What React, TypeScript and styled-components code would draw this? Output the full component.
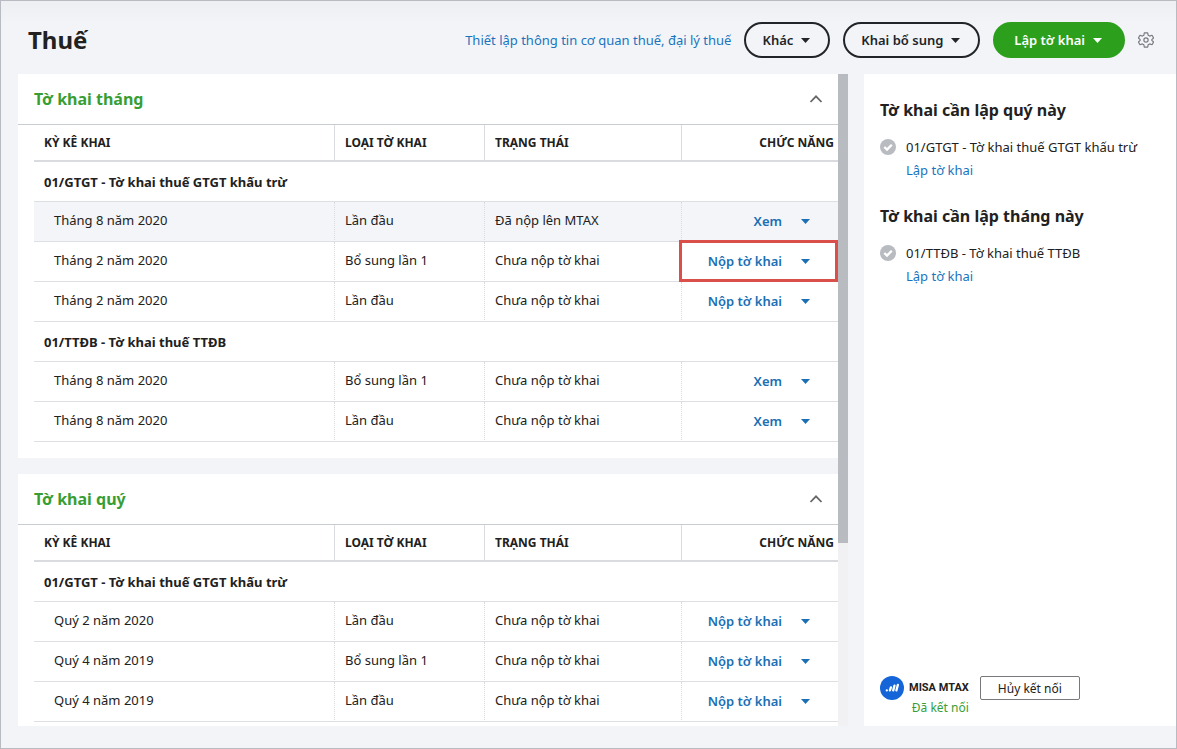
import React from "react";
import styled, { createGlobalStyle, css } from "styled-components";

const Global = createGlobalStyle`
  * { box-sizing: border-box; }
  body {
    margin: 0;
    font-family: "Noto Sans", "Open Sans", sans-serif;
    font-size: 13px;
    line-height: 18px;
    color: #212121;
  }
  button { font-family: inherit; cursor: pointer; }
  h1, h2, h3 { margin: 0; padding: 0; }
`;

const Page = styled.div`
  height: 100vh;
  min-height: 480px;
  display: flex;
  flex-direction: column;
  border: 1px solid #b8bbc1;
  background: linear-gradient(#edeff3, #f3f4f8 24px);
`;

const Header = styled.header`
  display: flex;
  align-items: center;
  height: 73px;
  flex: none;
  padding: 5px 22px 0 27px;
`;

const Title = styled.h1`
  flex: 1;
  font-size: 24px;
  line-height: 32px;
  font-weight: 700;
`;

const TextLink = styled.a`
  color: #1a74bd;
  text-decoration: none;
`;

const Actions = styled.div`
  display: flex;
  align-items: center;
  gap: 13px;
`;

const PillButton = styled.button<{ $primary?: boolean }>`
  display: flex;
  align-items: center;
  gap: 8px;
  height: 36px;
  padding: 0 18px 0 16px;
  border: 2px solid #212529;
  border-radius: 18px;
  background: transparent;
  color: #212529;
  font-size: 13px;
  font-weight: 600;
  ${(p) =>
    p.$primary &&
    css`
      padding: 0 21px 0 19px;
      border-color: #2ca01c;
      background: #2ca01c;
      color: #fff;
    `}
`;

const IconButton = styled.button`
  display: flex;
  align-items: center;
  justify-content: center;
  padding: 0;
  border: 0;
  background: none;
  color: #777b80;
`;

const Main = styled.main`
  flex: 1;
  min-height: 0;
  display: flex;
  padding: 0 0 22px 17px;
`;

const ListArea = styled.div`
  flex: 1;
  min-width: 0;
  overflow-y: auto;
  scrollbar-width: none;
  display: flex;
  flex-direction: column;
  gap: 16px;
`;

const ScrollTrack = styled.div`
  flex: none;
  width: 10px;
  margin-right: 16px;
  background: #f1f1f3;
`;

const ScrollThumb = styled.div`
  height: 72%;
  background: #b8bcc1;
`;

const Card = styled.section`
  flex: none;
  background: #fff;
  padding-bottom: 16px;
`;

const CardHeader = styled.div`
  display: flex;
  align-items: center;
  justify-content: space-between;
  height: 51px;
  padding: 0 14px 0 16px;
  border-bottom: 1px solid #c9ccd0;
`;

const CardTitle = styled.h2`
  font-size: 16px;
  line-height: 24px;
  font-weight: 700;
  color: #389e34;
`;

const TableWrap = styled.div`
  padding-left: 16px;
`;

const Table = styled.table`
  width: 100%;
  table-layout: fixed;
  border-collapse: separate;
  border-spacing: 0;
`;

const Col = styled.col<{ $width?: number }>`
  ${(p) => p.$width && `width: ${p.$width}px;`}
`;

const HeadCell = styled.th<{ $right?: boolean }>`
  height: 37px;
  padding: 0 4px 0 10px;
  font-size: 12px;
  font-weight: 700;
  text-align: ${(p) => (p.$right ? "right" : "left")};
  border-bottom: 2px solid #d9dbde;
  &:not(:last-child) { border-right: 1px solid #d9dbde; }
`;

const GroupCell = styled.th`
  height: 40px;
  padding: 0 10px;
  font-weight: 700;
  text-align: left;
  border-bottom: 1px solid #dddfe2;
`;

const Cell = styled.td`
  height: 40px;
  padding: 0 10px 4px;
  border-bottom: 1px solid #dddfe2;
  border-right: 1px dotted #d9dbde;
  &:first-child { padding-left: 20px; }
`;

const ActionCell = styled.td<{ $marked?: boolean }>`
  position: relative;
  height: 40px;
  padding: 0 28px 2px 10px;
  border-bottom: 1px solid #dddfe2;
  ${(p) =>
    p.$marked &&
    css`
      &::after {
        content: "";
        position: absolute;
        inset: -2px 0 -1px -3px;
        border: 3px solid #db4f4a;
        pointer-events: none;
      }
    `}
`;

const Row = styled.tr<{ $active?: boolean }>`
  background: ${(p) => (p.$active ? "#f3f5f8" : "#fff")};
`;

const RowActions = styled.div`
  display: flex;
  align-items: center;
  justify-content: flex-end;
  gap: 19px;
`;

const RowButton = styled.button`
  display: flex;
  align-items: center;
  height: 18px;
  padding: 0;
  border: 0;
  background: none;
  color: #1a6fb5;
  font-size: 13px;
  line-height: 18px;
  font-weight: 600;
`;

const MenuButton = styled(RowButton)`
  padding-top: 2px;
`;

const Aside = styled.aside`
  flex: none;
  width: 312px;
  display: flex;
  flex-direction: column;
  padding: 24px 16px 10px;
  background: #fff;
`;

const TodoGroup = styled.section`
  margin-bottom: 25px;
`;

const TodoTitle = styled.h3`
  font-size: 16px;
  line-height: 24px;
  font-weight: 700;
`;

const TodoItem = styled.div`
  display: grid;
  grid-template-columns: 16px 1fr;
  column-gap: 10px;
  row-gap: 5px;
  align-items: center;
  margin-top: 16px;
  a { grid-column: 2; }
`;

const Connection = styled.footer`
  display: flex;
  align-items: flex-start;
  margin-top: auto;
  gap: 11px;
`;

const Brand = styled.div`
  display: grid;
  grid-template-columns: 24px auto;
  column-gap: 5px;
  align-items: center;
`;

const BrandName = styled.strong`
  font-family: Roboto, sans-serif;
  font-size: 11px;
  line-height: 24px;
  font-weight: 700;
`;

const Status = styled.span`
  grid-column: 1 / -1;
  text-align: right;
  font-size: 12px;
  line-height: 16px;
  color: #389e34;
`;

const OutlineButton = styled.button`
  height: 24px;
  width: 100px;
  padding: 0;
  border: 1px solid #77797c;
  border-radius: 2px;
  background: #fff;
  color: #212121;
  font-size: 12px;
`;

const Caret = () => (
  <svg width="9" height="5" viewBox="0 0 9 5" aria-hidden="true">
    <path d="M0 0h9L4.500 5z" fill="currentColor" />
  </svg>
);

const ChevronUp = () => (
  <svg width="16" height="10" viewBox="0 0 16 10" fill="none" aria-hidden="true">
    <path d="M2.500 8 8 2.300 13.500 8" stroke="#666" strokeWidth="1.800" />
  </svg>
);

const Gear = () => (
  <svg width="16" height="16" viewBox="0 0 24 24" fill="none" stroke="currentColor" strokeWidth="1.800" strokeLinejoin="round" aria-hidden="true">
    <path d="M9.500 1.200h5l.7 3.600 2.300 1.300 3.500-1.200 2.400 4.200-2.700 2.400v1l2.700 2.400-2.400 4.200-3.500-1.200-2.300 1.300-.7 3.600h-5l-.7-3.600-2.300-1.300L3 19.100.6 14.900l2.700-2.400v-1L.6 9.100 3 4.900l3.500 1.200 2.300-1.300z" />
    <circle cx="12" cy="12" r="3.200" />
  </svg>
);

const CheckBadge = () => (
  <svg width="16" height="16" viewBox="0 0 16 16" fill="none" aria-hidden="true">
    <circle cx="8" cy="8" r="8" fill="#b8bcc1" />
    <path d="M4.300 8 7 10.600l4.800-4.900" stroke="#fff" strokeWidth="2.300" />
  </svg>
);

const BrandLogo = () => (
  <svg width="24" height="24" viewBox="0 0 24 24" fill="none" aria-hidden="true">
    <circle cx="12" cy="12" r="12" fill="#1565d8" />
    <g stroke="#fff" strokeWidth="2.300" strokeLinecap="round">
      <path d="M6.800 14.400v.01" />
      <path d="M9.900 14.400l1-3" />
      <path d="M13.200 14.400l1.300-4.800" />
      <path d="M16.400 14.400l1.500-5.600" />
    </g>
  </svg>
);

type Entry = { period: string; kind: string; status: string; action: string; active?: boolean; marked?: boolean };
type Group = { name: string; rows: Entry[] };

const PENDING = "Chưa nộp tờ khai";
const SUBMIT = "Nộp tờ khai";

const monthly: Group[] = [
  {
    name: "01/GTGT - Tờ khai thuế GTGT khấu trừ",
    rows: [
      { period: "Tháng 8 năm 2020", kind: "Lần đầu", status: "Đã nộp lên MTAX", action: "Xem", active: true },
      { period: "Tháng 2 năm 2020", kind: "Bổ sung lần 1", status: PENDING, action: SUBMIT, marked: true },
      { period: "Tháng 2 năm 2020", kind: "Lần đầu", status: PENDING, action: SUBMIT },
    ],
  },
  {
    name: "01/TTĐB - Tờ khai thuế TTĐB",
    rows: [
      { period: "Tháng 8 năm 2020", kind: "Bổ sung lần 1", status: PENDING, action: "Xem" },
      { period: "Tháng 8 năm 2020", kind: "Lần đầu", status: PENDING, action: "Xem" },
    ],
  },
];

const quarterly: Group[] = [
  {
    name: "01/GTGT - Tờ khai thuế GTGT khấu trừ",
    rows: [
      { period: "Quý 2 năm 2020", kind: "Lần đầu", status: PENDING, action: SUBMIT },
      { period: "Quý 4 năm 2019", kind: "Bổ sung lần 1", status: PENDING, action: SUBMIT },
      { period: "Quý 4 năm 2019", kind: "Lần đầu", status: PENDING, action: SUBMIT },
    ],
  },
];

const DeclarationCard = ({ title, groups }: { title: string; groups: Group[] }) => (
  <Card>
    <CardHeader>
      <CardTitle>{title}</CardTitle>
      <IconButton aria-label={title}>
        <ChevronUp />
      </IconButton>
    </CardHeader>
    <TableWrap>
      <Table>
        <colgroup>
          <Col />
          <Col $width={150} />
          <Col $width={197} />
          <Col $width={156} />
        </colgroup>
        <thead>
          <tr>
            <HeadCell>KỲ KÊ KHAI</HeadCell>
            <HeadCell>LOẠI TỜ KHAI</HeadCell>
            <HeadCell>TRẠNG THÁI</HeadCell>
            <HeadCell $right>CHỨC NĂNG</HeadCell>
          </tr>
        </thead>
        {groups.map((group) => (
          <tbody key={group.name}>
            <tr>
              <GroupCell colSpan={4}>{group.name}</GroupCell>
            </tr>
            {group.rows.map((row, i) => (
              <Row key={i} $active={row.active}>
                <Cell>{row.period}</Cell>
                <Cell>{row.kind}</Cell>
                <Cell>{row.status}</Cell>
                <ActionCell $marked={row.marked}>
                  <RowActions>
                    <RowButton>{row.action}</RowButton>
                    <MenuButton aria-label={row.action}>
                      <Caret />
                    </MenuButton>
                  </RowActions>
                </ActionCell>
              </Row>
            ))}
          </tbody>
        ))}
      </Table>
    </TableWrap>
  </Card>
);

const Todo = ({ title, form }: { title: string; form: string }) => (
  <TodoGroup>
    <TodoTitle>{title}</TodoTitle>
    <TodoItem>
      <CheckBadge />
      <span>{form}</span>
      <TextLink href="#">Lập tờ khai</TextLink>
    </TodoItem>
  </TodoGroup>
);

export default function App() {
  return (
    <>
      <Global />
      <Page>
        <Header>
          <Title>Thuế</Title>
          <Actions>
            <TextLink href="#">Thiết lập thông tin cơ quan thuế, đại lý thuế</TextLink>
            <PillButton>Khác <Caret /></PillButton>
            <PillButton>Khai bổ sung <Caret /></PillButton>
            <PillButton $primary>Lập tờ khai <Caret /></PillButton>
            <IconButton aria-label="Thiết lập">
              <Gear />
            </IconButton>
          </Actions>
        </Header>
        <Main>
          <ListArea>
            <DeclarationCard title="Tờ khai tháng" groups={monthly} />
            <DeclarationCard title="Tờ khai quý" groups={quarterly} />
          </ListArea>
          <ScrollTrack>
            <ScrollThumb />
          </ScrollTrack>
          <Aside>
            <Todo title="Tờ khai cần lập quý này" form="01/GTGT - Tờ khai thuế GTGT khấu trừ" />
            <Todo title="Tờ khai cần lập tháng này" form="01/TTĐB - Tờ khai thuế TTĐB" />
            <Connection>
              <Brand>
                <BrandLogo />
                <BrandName>MISA MTAX</BrandName>
                <Status>Đã kết nối</Status>
              </Brand>
              <OutlineButton>Hủy kết nối</OutlineButton>
            </Connection>
          </Aside>
        </Main>
      </Page>
    </>
  );
}
